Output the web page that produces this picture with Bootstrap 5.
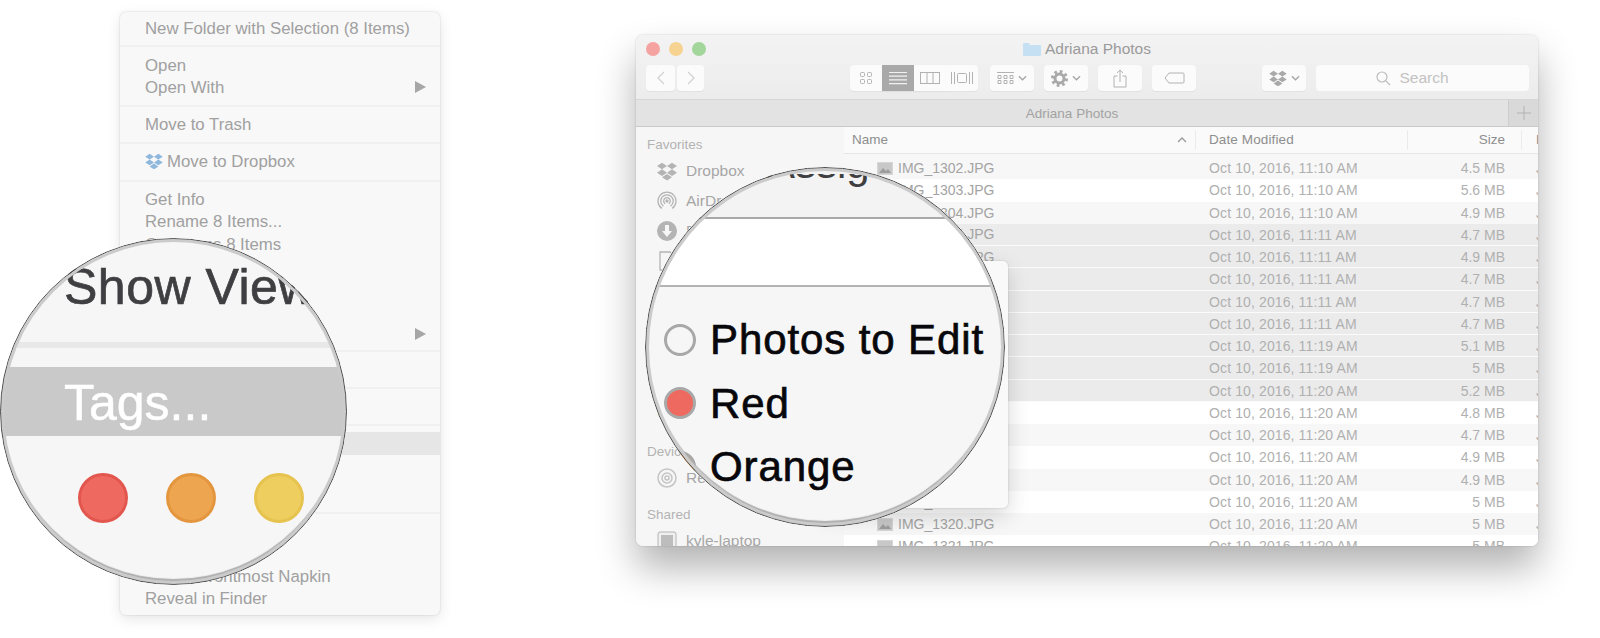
<!DOCTYPE html>
<html lang="en">

<head>
    <meta charset="UTF-8">
    <meta name="viewport" content="width=device-width, initial-scale=1.0">
    <title>Adriana Photos</title>
    <link href="https://cdn.jsdelivr.net/npm/bootstrap@5.3.3/dist/css/bootstrap.min.css" rel="stylesheet">
    <script src="https://cdn.jsdelivr.net/npm/bootstrap@5.3.3/dist/js/bootstrap.bundle.min.js"></script>
    <style>
        html,
        body {
            background: #fff;
            overflow: hidden;
        }

        .stage {
            width: 1600px;
            height: 638px;
            padding: 12px 0 0 120px;
            font-family: "Liberation Sans", sans-serif;
        }

        /* left context menu */
        .ctx-menu {
            width: 320px;
            height: 603px;
            flex: none;
            background: #f8f8f8;
            border-radius: 6px;
            box-shadow: 0 0 2px rgba(0, 0, 0, .18), 0 4px 14px rgba(0, 0, 0, .1);
            color: #a0a0a0;
            font-size: 16.8px;
            overflow: hidden;
        }

        .ctx-group {
            padding: 6.3px 0;
            border-bottom: 2px solid #f0f0f0;
        }

        .ctx-group:first-child {
            padding: 5px 0 6px;
        }

        .ctx-group:last-child {
            border-bottom: 0;
        }

        .ctx-group-drop {
            padding-bottom: 7.3px;
        }

        .ctx-group-info {
            padding-bottom: 5.3px;
        }

        .ctx-row {
            height: 22.4px;
            line-height: 23.4px;
            padding: 0 14px 0 25px;
            white-space: nowrap;
        }

        .ctx-hover {
            background: #e6e6e6;
        }

        .ctx-arrow {
            width: 0;
            height: 0;
            border-left: 11px solid #a6a6a6;
            border-top: 6px solid transparent;
            border-bottom: 6px solid transparent;
        }

        .ctx-tagspace {
            height: 51px;
        }

        /* finder window */
        .finder {
            width: 902px;
            height: 511px;
            flex: none;
            margin: 23px 0 0 196px;
            border-radius: 7px;
            overflow: hidden;
            background: #f6f6f6;
            box-shadow: 0 0 2px rgba(0, 0, 0, .2), 0 22px 38px rgba(0, 0, 0, .3);
        }

        .titlebar {
            height: 64px;
            background: linear-gradient(#f3f3f3, #ececec);
        }

        .title-top {
            display: grid;
            grid-template-columns: 1fr auto 1fr;
            align-items: center;
            height: 30px;
            padding: 0 10px 3px 10px;
            color: #9a9a9a;
            font-size: 15.5px;
        }

        .lights {
            gap: 9px;
        }

        .light {
            width: 14px;
            height: 14px;
            border-radius: 50%;
        }

        .light-red {
            background: #f4a3a0;
        }

        .light-yellow {
            background: #f7d391;
        }

        .light-green {
            background: #a3d69b;
        }

        .toolbar {
            padding: 0 9px 0 10px;
        }

        .tb-btn.btn {
            height: 26px;
            padding: 0;
            border: 0;
            border-radius: 4px;
            background: #fbfbfb;
            box-shadow: 0 1px 1px rgba(0, 0, 0, .05);
            display: flex;
            align-items: center;
            justify-content: center;
            gap: 4px;
        }

        .tb-back {
            width: 29px;
        }

        .tb-forward {
            width: 27px;
            margin-left: 2px;
        }

        .tb-wide {
            width: 44px;
            margin-left: 10px;
        }

        .tb-views {
            margin-left: 146px;
            margin-right: 2px;
        }

        .tb-drop.btn {
            margin-left: 66px;
        }

        .tb-view.btn {
            width: 32px;
            border-radius: 0;
        }

        .tb-view.btn:first-child {
            border-radius: 4px 0 0 4px;
        }

        .tb-view.btn:last-child {
            border-radius: 0 4px 4px 0;
        }

        .tb-view.tb-on.btn {
            background: #a9a9a9;
        }

        .tb-search {
            width: 213px;
            height: 26px;
            margin-left: 10px;
            padding-right: 20px;
            background: #fbfbfb;
            border-radius: 4px;
            color: #c2c2c2;
            font-size: 15.5px;
        }

        .tabbar {
            height: 28px;
            background: #e3e3e3;
            border-top: 1px solid #d6d6d6;
            border-bottom: 1px solid #c9c9c9;
            color: #a2a2a2;
            font-size: 13.5px;
        }

        .tab-plus {
            width: 30px;
            background: #d9d9d9;
            border-left: 1px solid #cdcdcd;
        }

        /* sidebar */
        .side {
            width: 208px;
            flex: none;
            background: #f6f6f6;
            padding: 5px 0 0 11px;
            color: #a6a6a6;
            font-size: 15.5px;
        }

        .side-head {
            height: 24px;
            line-height: 26px;
            font-size: 13.5px;
            color: #b3b3b3;
        }

        .side-devices {
            margin-top: 13px;
        }

        .side-shared {
            margin-top: 9px;
        }

        .side-item {
            height: 30px;
            gap: 9px;
            padding-left: 10px;
            white-space: nowrap;
        }

        .side-icon {
            width: 20px;
            height: 20px;
            flex: none;
        }

        /* file list */
        .files {
            width: 694px;
            flex: none;
            background: #fff;
        }

        .list-head {
            height: 27px;
            background: #fafafa;
            border-bottom: 1px solid #e6e6e6;
            color: #8e8e8e;
            font-size: 13.5px;
        }

        .col-name {
            width: 365px;
            flex: none;
        }

        .col-date {
            width: 199px;
            flex: none;
            letter-spacing: .12px;
        }

        .col-size {
            width: 97px;
            flex: none;
            text-align: right;
        }

        .col-kind {
            flex: none;
            padding-left: 31px;
            white-space: nowrap;
        }

        .head-name {
            padding: 0 14px 0 8px;
            height: 100%;
            position: relative;
        }

        .head-name::after,
        .head-date::after,
        .head-size::after {
            content: "";
            position: absolute;
            right: 13px;
            top: 3px;
            bottom: 3px;
            width: 1px;
            background: #ebebeb;
        }

        .head-date,
        .head-size {
            position: relative;
            height: 100%;
            line-height: 26px;
        }

        .head-date::after {
            right: 0;
        }

        .head-size::after {
            right: -17px;
        }

        .file-row {
            height: 22.25px;
            line-height: 22.25px;
            color: #b0b0b0;
            font-size: 14px;
            background: #fff;
        }

        .file-row:nth-child(odd) {
            background: #f7f7f7;
        }

        .file-row:first-child {
            height: 25.25px;
            padding-top: 3px;
        }

        .file-row.picked {
            background: #ebebeb;
            border-bottom: 1px solid #fbfbfb;
        }

        .file-name {
            padding-left: 33px;
            gap: 5px;
            color: #a4a4a4;
        }

        .file-thumb {
            width: 16px;
            height: 13px;
            flex: none;
        }

        /* tag popup under the second lens */
        .tag-popup {
            position: absolute;
            left: 820px;
            top: 261px;
            width: 188px;
            height: 247px;
            background: #f9f9f9;
            border-radius: 5px;
            box-shadow: 0 0 2px rgba(0, 0, 0, .2), 0 8px 22px rgba(0, 0, 0, .16);
        }

        /* magnifier circles */
        .lens {
            position: absolute;
            border-radius: 50%;
            overflow: hidden;
            background: #f6f6f6;
        }

        .lens::after {
            content: "";
            position: absolute;
            inset: 0;
            border-radius: 50%;
            border: 1px solid #4e4e4e;
            box-shadow: inset 0 0 0 3px #cbcbcb, inset 0 -4px 1px 1px #aeaeae;
        }

        .lens-menu {
            left: 0;
            top: 238px;
            width: 347px;
            height: 347px;
            padding-top: 19px;
        }

        .lens-show {
            height: 60px;
            line-height: 60px;
            padding-left: 64px;
            font-size: 50px;
            letter-spacing: .5px;
            color: #3f3f42;
            -webkit-text-stroke: .7px #3f3f42;
            white-space: nowrap;
        }

        .lens-band {
            height: 6px;
            margin-top: 25px;
            background: #e8e8e8;
        }

        .lens-tags {
            height: 69px;
            line-height: 72px;
            margin-top: 19px;
            padding-left: 64px;
            background: #c9c9c9;
            color: #fff;
            font-size: 50px;
            -webkit-text-stroke: .5px #fff;
        }

        .lens-dots {
            gap: 38px;
            margin-top: 37px;
            padding-left: 78px;
        }

        .lens-dot {
            width: 50px;
            height: 50px;
            flex: none;
            border-radius: 50%;
            border: 3px solid;
        }

        .lens-dot-red {
            background: #ee6a60;
            border-color: #e2564e;
        }

        .lens-dot-orange {
            background: #eda550;
            border-color: #e4963f;
        }

        .lens-dot-yellow {
            background: #efce60;
            border-color: #e6c24e;
        }

        .lens-tagmenu {
            left: 645px;
            top: 167px;
            width: 360px;
            height: 360px;
            color: #08080c;
            font-size: 42px;
            letter-spacing: .9px;
            -webkit-text-stroke: .7px #08080c;
        }

        .lens-cutoff {
            height: 50px;
            background: #f3f3f3;
            padding: 7px 0 0 122px;
            font-size: 42px;
            letter-spacing: 0;
            color: #3f3f42;
            -webkit-text-stroke: 0;
        }

        .lens-cutoff-clip {
            height: 14px;
            overflow: hidden;
            line-height: 0;
            white-space: nowrap;
        }

        .lens-cutoff-clip span {
            display: block;
            margin-top: -10px;
        }

        .lens-input {
            height: 70px;
            margin-bottom: 21px;
            background: #fff;
            border-top: 2px solid #a9a9a9;
            border-bottom: 2px solid #b4b4b4;
        }

        .lens-tagrow {
            height: 63.5px;
            gap: 14px;
            padding-left: 19px;
            white-space: nowrap;
        }

        .lens-ring {
            width: 32px;
            height: 32px;
            flex: none;
            border-radius: 50%;
            border: 3px solid #a8a8a8;
        }
    </style>
</head>

<body class="m-0">
    <svg class="d-none">
        <symbol id="dbx" viewBox="0 0 24 22">
            <path d="M6 1l6 4-6 4-6-4zM18 1l6 4-6 4-6-4zM0 13l6-4 6 4-6 4zM24 13l-6-4-6 4 6 4zM6 18.5l6-4 6 4-6 4z" />
        </symbol>
        <symbol id="thumb" viewBox="0 0 16 13">
            <rect width="16" height="13" fill="#d6d6d6" />
            <rect x="1" y="1" width="14" height="11" fill="#c8c8c8" />
            <path d="M2 11l4-5 3 3 2-2 3 4z" fill="#9d9d9d" />
        </symbol>
        <symbol id="chev" viewBox="0 0 10 6">
            <path d="M1 1l4 4 4-4" fill="none" stroke="#a5a5a5" stroke-width="1.4" />
        </symbol>
    </svg>

    <div class="stage d-flex align-items-start position-relative">
        <div class="ctx-menu">
            <div class="ctx-group">
                <div class="ctx-row">New Folder with Selection (8 Items)</div>
            </div>
            <div class="ctx-group">
                <div class="ctx-row">Open</div>
                <div class="ctx-row d-flex justify-content-between align-items-center">Open With<span class="ctx-arrow"></span></div>
            </div>
            <div class="ctx-group">
                <div class="ctx-row">Move to Trash</div>
            </div>
            <div class="ctx-group ctx-group-drop">
                <div class="ctx-row d-flex align-items-center gap-1">
                    <svg width="18" height="16" fill="#8fb8dc"><use href="#dbx" /></svg>
                    <span>Move to Dropbox</span>
                </div>
            </div>
            <div class="ctx-group ctx-group-info">
                <div class="ctx-row">Get Info</div>
                <div class="ctx-row">Rename 8 Items...</div>
                <div class="ctx-row">Compress 8 Items</div>
                <div class="ctx-row">Duplicate</div>
                <div class="ctx-row">Make Alias</div>
                <div class="ctx-row">Quick Look 8 Items</div>
                <div class="ctx-row d-flex justify-content-between align-items-center">Share<span class="ctx-arrow"></span></div>
            </div>
            <div class="ctx-group">
                <div class="ctx-row">Copy 8 Items</div>
            </div>
            <div class="ctx-group">
                <div class="ctx-row">Show View Options</div>
            </div>
            <div class="ctx-group">
                <div class="ctx-row ctx-hover">Tags...</div>
                <div class="ctx-tagspace"></div>
            </div>
            <div class="ctx-group">
                <div class="ctx-row">Services</div>
                <div class="ctx-row">Open Napkin</div>
                <div class="ctx-row">Add to Frontmost Napkin</div>
                <div class="ctx-row">Reveal in Finder</div>
            </div>
        </div>

        <div class="finder d-flex flex-column">
            <div class="titlebar flex-shrink-0">
                <div class="title-top">
                    <div class="lights d-flex">
                        <span class="light light-red"></span>
                        <span class="light light-yellow"></span>
                        <span class="light light-green"></span>
                    </div>
                    <div class="d-flex align-items-center gap-1">
                        <svg width="18" height="14" viewBox="0 0 18 14"><path d="M0 2q0-1 1-1h5l1 2h10q1 0 1 1v9q0 1-1 1H1q-1 0-1-1z" fill="#c4e0f2" /></svg>
                        <span>Adriana Photos</span>
                    </div>
                    <div></div>
                </div>
                <div class="toolbar d-flex">
                    <button class="btn tb-btn tb-back"><svg width="10" height="16" viewBox="0 0 10 16"><path d="M8 2L2 8l6 6" fill="none" stroke="#d2d2d2" stroke-width="1.3" /></svg></button>
                    <button class="btn tb-btn tb-forward"><svg width="10" height="16" viewBox="0 0 10 16"><path d="M2 2l6 6-6 6" fill="none" stroke="#d2d2d2" stroke-width="1.3" /></svg></button>
                    <div class="tb-views d-flex">
                        <button class="btn tb-btn tb-view"><svg width="14" height="14" viewBox="0 0 14 14" fill="none" stroke="#b2b2b2"><rect x="1.5" y="1.5" width="4" height="4" rx="1" /><rect x="8.5" y="1.5" width="4" height="4" rx="1" /><rect x="1.5" y="8.5" width="4" height="4" rx="1" /><rect x="8.5" y="8.5" width="4" height="4" rx="1" /></svg></button>
                        <button class="btn tb-btn tb-view tb-on"><svg width="18" height="14" viewBox="0 0 18 14" stroke="#f1f1f1" stroke-width="1.2"><path d="M0 1.5h18M0 5.2h18M0 8.9h18M0 12.6h18" /></svg></button>
                        <button class="btn tb-btn tb-view"><svg width="20" height="14" viewBox="0 0 20 14" fill="none" stroke="#b2b2b2"><rect x=".5" y="1.5" width="19" height="11" /><path d="M7 1.5v11M13 1.5v11" /></svg></button>
                        <button class="btn tb-btn tb-view"><svg width="24" height="14" viewBox="0 0 24 14" fill="none" stroke="#b2b2b2"><rect x="7.5" y="2.5" width="9" height="9" rx="1" /><path d="M1.5 1v12M4.5 1v12M19.5 1v12M22.5 1v12" /></svg></button>
                    </div>
                    <button class="btn tb-btn tb-wide"><svg width="17" height="14" viewBox="0 0 17 14" fill="none" stroke="#b2b2b2"><path d="M0 1.5h17" /><path d="M1 4.5h3v3H1zM7 4.5h3v3H7zM13 4.5h3v3h-3zM1 9.5h3v3H1zM7 9.5h3v3H7zM13 9.5h3v3h-3z" /></svg><svg width="9" height="6"><use href="#chev" /></svg></button>
                    <button class="btn tb-btn tb-wide"><svg width="17" height="17" viewBox="0 0 17 17"><circle cx="8.5" cy="8.5" r="4.5" fill="none" stroke="#a9a9a9" stroke-width="3" /><circle cx="8.5" cy="8.5" r="7" fill="none" stroke="#a9a9a9" stroke-width="3" stroke-dasharray="2.7 2.8" /></svg><svg width="9" height="6"><use href="#chev" /></svg></button>
                    <button class="btn tb-btn tb-wide"><svg width="14" height="19" viewBox="0 0 14 19" fill="none" stroke="#b2b2b2"><path d="M4.5 7H1v11h12V7H9.5M7 13V1M4 4l3-3 3 3" /></svg></button>
                    <button class="btn tb-btn tb-wide"><svg width="21" height="12" viewBox="0 0 21 12" fill="none" stroke="#b2b2b2"><path d="M5 1h14q1 0 1 1v8q0 1-1 1H5L1 6z" /></svg></button>
                    <button class="btn tb-btn tb-wide tb-drop"><svg width="18" height="16" fill="#a9a9a9"><use href="#dbx" /></svg><svg width="9" height="6"><use href="#chev" /></svg></button>
                    <div class="tb-search d-flex align-items-center justify-content-center gap-2">
                        <svg width="15" height="15" viewBox="0 0 15 15" fill="none" stroke="#bdbdbd" stroke-width="1.2"><circle cx="6" cy="6" r="5" /><path d="M9.7 9.7L14 14" /></svg>
                        <span>Search</span>
                    </div>
                </div>
            </div>

            <div class="tabbar d-flex flex-shrink-0">
                <div class="flex-grow-1 text-center lh-lg">Adriana Photos</div>
                <div class="tab-plus d-flex align-items-center justify-content-center">
                    <svg width="14" height="14" viewBox="0 0 14 14" stroke="#b2b2b2"><path d="M7 0v14M0 7h14" /></svg>
                </div>
            </div>

            <div class="d-flex flex-grow-1 overflow-hidden">
                <div class="side">
                    <div class="side-head">Favorites</div>
                    <div class="side-item d-flex align-items-center">
                        <svg class="side-icon" fill="#b4b4b4"><use href="#dbx" /></svg>Dropbox
                    </div>
                    <div class="side-item d-flex align-items-center">
                        <svg class="side-icon" viewBox="0 0 20 20" fill="none" stroke="#b4b4b4" stroke-width="1.3"><path d="M4.8 17.4A9 9 0 1 1 15.2 17.4M6.4 15.1A6.2 6.2 0 1 1 13.6 15.1M8.1 12.7A3.3 3.3 0 1 1 11.9 12.7" /><circle cx="10" cy="10" r="1" fill="#b4b4b4" /></svg>AirDrop
                    </div>
                    <div class="side-item d-flex align-items-center">
                        <svg class="side-icon" viewBox="0 0 20 20"><circle cx="10" cy="10" r="10" fill="#b4b4b4" /><path d="M8 4h4v6h3l-5 6-5-6h3z" fill="#f6f6f6" /></svg>Downloads
                    </div>
                    <div class="side-item d-flex align-items-center">
                        <svg class="side-icon" viewBox="0 0 20 20" fill="none" stroke="#b4b4b4" stroke-width="1.3"><path d="M3 1h10l4 4v14H3z" /></svg>Documents
                    </div>
                    <div class="side-item d-flex align-items-center">Desktop</div>
                    <div class="side-item d-flex align-items-center">Applications</div>
                    <div class="side-item d-flex align-items-center">Pictures</div>
                    <div class="side-item d-flex align-items-center">Movies</div>
                    <div class="side-item d-flex align-items-center">Music</div>
                    <div class="side-head side-devices">Devices</div>
                    <div class="side-item d-flex align-items-center">
                        <svg class="side-icon" viewBox="0 0 20 20" fill="none" stroke="#c4c4c4" stroke-width="1.5"><circle cx="10" cy="10" r="9" /><circle cx="10" cy="10" r="5" /><circle cx="10" cy="10" r="2" /></svg>Remote Disc
                    </div>
                    <div class="side-head side-shared">Shared</div>
                    <div class="side-item d-flex align-items-center">
                        <svg class="side-icon" viewBox="0 0 20 20"><rect x="1" y="1" width="18" height="18" rx="2" fill="#efefef" stroke="#b4b4b4" /><rect x="4" y="4" width="12" height="12" fill="#bdbdbd" /></svg>kyle-laptop
                    </div>
                </div>

                <div class="files">
                    <div class="list-head d-flex align-items-center">
                        <div class="col-name head-name d-flex align-items-center justify-content-between">
                            <span>Name</span>
                            <svg class="me-2" width="10" height="6" viewBox="0 0 10 6"><path d="M1 5l4-4 4 4" fill="none" stroke="#9a9a9a" stroke-width="1.3" /></svg>
                        </div>
                        <div class="col-date head-date">Date Modified</div>
                        <div class="col-size head-size">Size</div>
                        <div class="col-kind">Kind</div>
                    </div>
                    <div>
                        <div class="file-row d-flex"><div class="col-name file-name d-flex align-items-center"><svg class="file-thumb"><use href="#thumb" /></svg>IMG_1302.JPG</div><div class="col-date">Oct 10, 2016, 11:10 AM</div><div class="col-size">4.5 MB</div><div class="col-kind">JPEG image</div></div>
                        <div class="file-row d-flex"><div class="col-name file-name d-flex align-items-center"><svg class="file-thumb"><use href="#thumb" /></svg>IMG_1303.JPG</div><div class="col-date">Oct 10, 2016, 11:10 AM</div><div class="col-size">5.6 MB</div><div class="col-kind">JPEG image</div></div>
                        <div class="file-row d-flex"><div class="col-name file-name d-flex align-items-center"><svg class="file-thumb"><use href="#thumb" /></svg>IMG_1304.JPG</div><div class="col-date">Oct 10, 2016, 11:10 AM</div><div class="col-size">4.9 MB</div><div class="col-kind">JPEG image</div></div>
                        <div class="file-row picked d-flex"><div class="col-name file-name d-flex align-items-center"><svg class="file-thumb"><use href="#thumb" /></svg>IMG_1305.JPG</div><div class="col-date">Oct 10, 2016, 11:11 AM</div><div class="col-size">4.7 MB</div><div class="col-kind">JPEG image</div></div>
                        <div class="file-row picked d-flex"><div class="col-name file-name d-flex align-items-center"><svg class="file-thumb"><use href="#thumb" /></svg>IMG_1306.JPG</div><div class="col-date">Oct 10, 2016, 11:11 AM</div><div class="col-size">4.9 MB</div><div class="col-kind">JPEG image</div></div>
                        <div class="file-row picked d-flex"><div class="col-name file-name d-flex align-items-center"><svg class="file-thumb"><use href="#thumb" /></svg>IMG_1307.JPG</div><div class="col-date">Oct 10, 2016, 11:11 AM</div><div class="col-size">4.7 MB</div><div class="col-kind">JPEG image</div></div>
                        <div class="file-row picked d-flex"><div class="col-name file-name d-flex align-items-center"><svg class="file-thumb"><use href="#thumb" /></svg>IMG_1308.JPG</div><div class="col-date">Oct 10, 2016, 11:11 AM</div><div class="col-size">4.7 MB</div><div class="col-kind">JPEG image</div></div>
                        <div class="file-row picked d-flex"><div class="col-name file-name d-flex align-items-center"><svg class="file-thumb"><use href="#thumb" /></svg>IMG_1309.JPG</div><div class="col-date">Oct 10, 2016, 11:11 AM</div><div class="col-size">4.7 MB</div><div class="col-kind">JPEG image</div></div>
                        <div class="file-row picked d-flex"><div class="col-name file-name d-flex align-items-center"><svg class="file-thumb"><use href="#thumb" /></svg>IMG_1310.JPG</div><div class="col-date">Oct 10, 2016, 11:19 AM</div><div class="col-size">5.1 MB</div><div class="col-kind">JPEG image</div></div>
                        <div class="file-row picked d-flex"><div class="col-name file-name d-flex align-items-center"><svg class="file-thumb"><use href="#thumb" /></svg>IMG_1311.JPG</div><div class="col-date">Oct 10, 2016, 11:19 AM</div><div class="col-size">5 MB</div><div class="col-kind">JPEG image</div></div>
                        <div class="file-row picked d-flex"><div class="col-name file-name d-flex align-items-center"><svg class="file-thumb"><use href="#thumb" /></svg>IMG_1312.JPG</div><div class="col-date">Oct 10, 2016, 11:20 AM</div><div class="col-size">5.2 MB</div><div class="col-kind">JPEG image</div></div>
                        <div class="file-row d-flex"><div class="col-name file-name d-flex align-items-center"><svg class="file-thumb"><use href="#thumb" /></svg>IMG_1313.JPG</div><div class="col-date">Oct 10, 2016, 11:20 AM</div><div class="col-size">4.8 MB</div><div class="col-kind">JPEG image</div></div>
                        <div class="file-row d-flex"><div class="col-name file-name d-flex align-items-center"><svg class="file-thumb"><use href="#thumb" /></svg>IMG_1314.JPG</div><div class="col-date">Oct 10, 2016, 11:20 AM</div><div class="col-size">4.7 MB</div><div class="col-kind">JPEG image</div></div>
                        <div class="file-row d-flex"><div class="col-name file-name d-flex align-items-center"><svg class="file-thumb"><use href="#thumb" /></svg>IMG_1315.JPG</div><div class="col-date">Oct 10, 2016, 11:20 AM</div><div class="col-size">4.9 MB</div><div class="col-kind">JPEG image</div></div>
                        <div class="file-row d-flex"><div class="col-name file-name d-flex align-items-center"><svg class="file-thumb"><use href="#thumb" /></svg>IMG_1316.JPG</div><div class="col-date">Oct 10, 2016, 11:20 AM</div><div class="col-size">4.9 MB</div><div class="col-kind">JPEG image</div></div>
                        <div class="file-row d-flex"><div class="col-name file-name d-flex align-items-center"><svg class="file-thumb"><use href="#thumb" /></svg>IMG_1317.JPG</div><div class="col-date">Oct 10, 2016, 11:20 AM</div><div class="col-size">5 MB</div><div class="col-kind">JPEG image</div></div>
                        <div class="file-row d-flex"><div class="col-name file-name d-flex align-items-center"><svg class="file-thumb"><use href="#thumb" /></svg>IMG_1320.JPG</div><div class="col-date">Oct 10, 2016, 11:20 AM</div><div class="col-size">5 MB</div><div class="col-kind">JPEG image</div></div>
                        <div class="file-row d-flex"><div class="col-name file-name d-flex align-items-center"><svg class="file-thumb"><use href="#thumb" /></svg>IMG_1321.JPG</div><div class="col-date">Oct 10, 2016, 11:20 AM</div><div class="col-size">5 MB</div><div class="col-kind">JPEG image</div></div>
                    </div>
                </div>
            </div>
        </div>

        <div class="tag-popup"></div>

        <div class="lens lens-menu">
            <div class="lens-show">Show View Options</div>
            <div class="lens-band"></div>
            <div class="lens-tags">Tags...</div>
            <div class="lens-dots d-flex">
                <span class="lens-dot lens-dot-red"></span>
                <span class="lens-dot lens-dot-orange"></span>
                <span class="lens-dot lens-dot-yellow"></span>
            </div>
        </div>

        <div class="lens lens-tagmenu">
            <div class="lens-cutoff"><div class="lens-cutoff-clip"><span>Assig</span></div></div>
            <div class="lens-input"></div>
            <div class="lens-tagrow d-flex align-items-center"><span class="lens-ring"></span>Photos to Edit</div>
            <div class="lens-tagrow d-flex align-items-center"><span class="lens-ring lens-dot-red"></span>Red</div>
            <div class="lens-tagrow d-flex align-items-center"><span class="lens-ring lens-dot-orange"></span>Orange</div>
        </div>
    </div>
</body>

</html>
